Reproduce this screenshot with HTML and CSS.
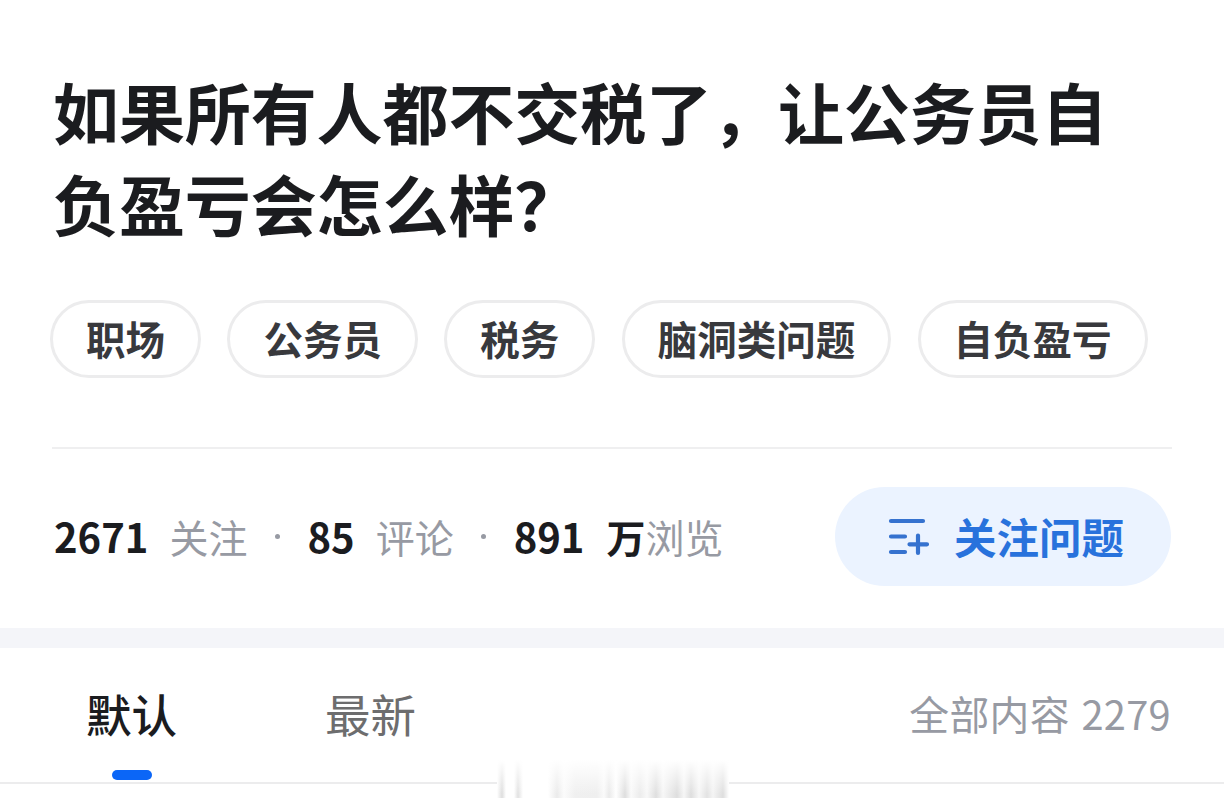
FILE: index.html
```html
<!DOCTYPE html>
<html lang="zh-CN">
<head>
<meta charset="utf-8">
<title>问题详情</title>
<link rel="stylesheet" href="styles.css">
</head>
<body>
<main class="page">
  <section class="question">
    <h1 class="title">如果所有人都不交税了，让公务员自<br>负盈亏会怎么样？</h1>
    <div class="tags">
      <span class="tag">职场</span>
      <span class="tag">公务员</span>
      <span class="tag">税务</span>
      <span class="tag">脑洞类问题</span>
      <span class="tag">自负盈亏</span>
    </div>
    <div class="summary">
      <div class="stats">
        <b class="num">2671</b><span class="label">关注</span><i class="dot"></i>
        <b class="num">85</b><span class="label">评论</span><i class="dot"></i>
        <b class="num">891</b><b class="unit">万</b><span class="views">浏览</span>
      </div>
      <button class="follow">
        <svg class="follow-icon" width="44" height="40" viewBox="0 0 44 40" fill="none" stroke="#3572cf" stroke-width="4.200" stroke-linecap="round">
          <path d="M4 4H36M4 19.500H18M4 35H18M22.500 27.300H40M31 18.500V36"/>
        </svg>
        <span>关注问题</span>
      </button>
    </div>
  </section>
  <nav class="tabs">
    <span class="tab active">默认</span>
    <span class="tab">最新</span>
    <span class="total">全部内容 2279</span>
    <div class="smudge"></div>
  </nav>
</main>
</body>
</html>
```
FILE: styles.css
```css
* { box-sizing: border-box; }
body {
  margin: 0;
  background: #fff;
  font-family: "Noto Sans CJK SC", sans-serif;
  color: #1b1c1f;
}
.page { width: 1224px; height: 811px; overflow: hidden; }
.question {
  height: 648px;
  padding: 64px 52px 0;
  border-bottom: 20px solid #f4f5f9;
}
.title {
  margin: 0 0 0 1px;
  font-size: 66px;
  line-height: 92px;
  font-weight: 700;
  letter-spacing: -0.1px;
  white-space: nowrap;
}
.tags {
  display: flex;
  gap: 26.400px;
  margin: 52px 0 0 -2px;
}
.tag {
  height: 78px;
  padding: 0 33px;
  border: 3px solid #ececed;
  border-radius: 39px;
  font-size: 39.500px;
  line-height: 70px;
  font-weight: 700;
  color: #38393d;
  white-space: nowrap;
}
.summary {
  display: flex;
  justify-content: space-between;
  margin-top: 69px;
  padding: 38px 1px 0 2px;
  border-top: 2px solid #efeff0;
}
.stats {
  display: flex;
  align-items: center;
  height: 99px;
  font-size: 39px;
  line-height: 60px;
  color: #979aa3;
  white-space: nowrap;
}
.num {
  padding-bottom: 2px;
  font-size: 40px;
  color: #1b1c1f;
}
.label, .unit, .views { padding-bottom: 2px; }
.label { margin-left: 21px; }
.dot {
  width: 5px;
  height: 5px;
  margin: 0 27.500px;
  border-radius: 50%;
  background: #979aa3;
}
.unit { margin-left: 22px; color: #1b1c1f; }
.follow {
  display: flex;
  align-items: center;
  width: 336px;
  height: 99px;
  padding: 0 0 2px 52px;
  border: 0;
  border-radius: 50px;
  background: #ebf3ff;
  color: #2872dc;
  font: 700 42.500px/60px "Noto Sans CJK SC", sans-serif;
  white-space: nowrap;
}
.follow-icon { margin: 2px 23px 0 0; }
.tabs {
  position: relative;
  display: flex;
  height: 136px;
  padding: 0 53px 0 86px;
  border-bottom: 2px solid #ececed;
  line-height: 130px;
}
.tab {
  position: relative;
  margin-right: 148px;
  font-size: 45.500px;
  font-weight: 400;
  color: #6d6d6e;
}
.active { font-weight: 500; color: #1b1c1f; }
.active::after {
  content: "";
  position: absolute;
  left: 26px;
  bottom: 2px;
  width: 40px;
  height: 10px;
  border-radius: 5px;
  background: #0b66f7;
}
.total {
  margin-left: auto;
  font-size: 39.800px;
  letter-spacing: 0.300px;
  word-spacing: 2.500px;
  color: #979aa3;
}
.smudge {
  position: absolute;
  left: 497px;
  top: 112px;
  width: 232px;
  height: 38px;
  background:
    linear-gradient(#fff, transparent 90%),
    linear-gradient(90deg, #fff 0, #dedede 5px, #fff 9px, #fff 17px, #e2e2e2 21px, #fff 26px, #fff 51px, #ebebeb 60px, #fbfbfb 67px, #f0f0f0 78px, #efefef 100px, #fafafa 107px, #eaeaea 112px, #fff 119px, #dedede 128px, #fafafa 134px, #ececec 143px, #f8f8f8 150px, #dfdfdf 159px, #f7f7f7 166px, #dedede 180px, #f6f6f6 187px, #dedede 194px, #f7f7f7 202px, #e3e3e3 210px, #f4f4f4 216px, #dedede 226px, #fff 232px);
}
```
